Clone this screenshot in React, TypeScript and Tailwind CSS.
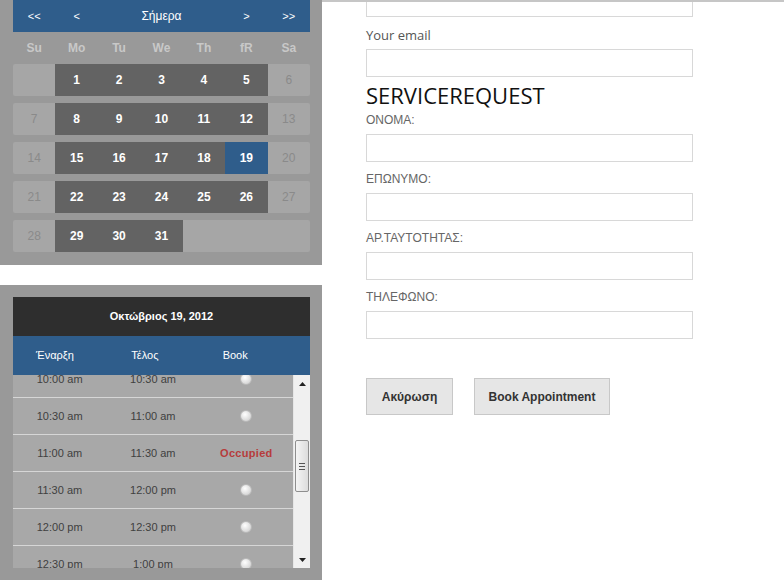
import React from "react";

const arial = { fontFamily: '"Liberation Sans", Arial, sans-serif' };

type Cell = { d: string; kind: "light" | "dark" | "sel" | "empty" };

const rows: Cell[][] = [
  [
    { d: "", kind: "light" },
    { d: "1", kind: "dark" },
    { d: "2", kind: "dark" },
    { d: "3", kind: "dark" },
    { d: "4", kind: "dark" },
    { d: "5", kind: "dark" },
    { d: "6", kind: "light" },
  ],
  [
    { d: "7", kind: "light" },
    { d: "8", kind: "dark" },
    { d: "9", kind: "dark" },
    { d: "10", kind: "dark" },
    { d: "11", kind: "dark" },
    { d: "12", kind: "dark" },
    { d: "13", kind: "light" },
  ],
  [
    { d: "14", kind: "light" },
    { d: "15", kind: "dark" },
    { d: "16", kind: "dark" },
    { d: "17", kind: "dark" },
    { d: "18", kind: "dark" },
    { d: "19", kind: "sel" },
    { d: "20", kind: "light" },
  ],
  [
    { d: "21", kind: "light" },
    { d: "22", kind: "dark" },
    { d: "23", kind: "dark" },
    { d: "24", kind: "dark" },
    { d: "25", kind: "dark" },
    { d: "26", kind: "dark" },
    { d: "27", kind: "light" },
  ],
  [
    { d: "28", kind: "light" },
    { d: "29", kind: "dark" },
    { d: "30", kind: "dark" },
    { d: "31", kind: "dark" },
    { d: "", kind: "light" },
    { d: "", kind: "light" },
    { d: "", kind: "light" },
  ],
];

function DayCell({ c }: { c: Cell }) {
  if (c.kind === "dark")
    return (
      <div className="flex items-center justify-center bg-[#636363] text-[12px] font-bold text-white">
        {c.d}
      </div>
    );
  if (c.kind === "sel")
    return (
      <div className="flex items-center justify-center bg-[#2f5d8b] text-[12px] font-bold text-white">
        {c.d}
      </div>
    );
  return (
    <div className="flex items-center justify-center bg-[#a6a6a6] text-[12px] text-[#8a8a8a]">
      {c.d}
    </div>
  );
}

function Calendar() {
  return (
    <div className="bg-[#999999] pl-[13px] pr-[12px] pb-[13px]" style={arial}>
      <div className="grid h-[32px] grid-cols-7 items-center bg-[#2f5d8b] text-[11px] text-white">
        <div className="text-center">&lt;&lt;</div>
        <div className="text-center">&lt;</div>
        <div className="col-span-3 text-center text-[12px]">Σήμερα</div>
        <div className="text-center">&gt;</div>
        <div className="text-center">&gt;&gt;</div>
      </div>
      <div className="grid h-[32px] grid-cols-7 items-center text-[12px] font-bold text-[#c8c8c8]">
        {["Su", "Mo", "Tu", "We", "Th", "fR", "Sa"].map((d) => (
          <div key={d} className="text-center">
            {d}
          </div>
        ))}
      </div>
      <div className="flex flex-col gap-[7px]">
        {rows.map((r, i) => (
          <div key={i} className="grid h-[32px] grid-cols-7 overflow-hidden rounded-[2px]">
            {r.map((c, j) => (
              <DayCell key={j} c={c} />
            ))}
          </div>
        ))}
      </div>
    </div>
  );
}

const slots = [
  ["10:00 am", "10:30 am", false],
  ["10:30 am", "11:00 am", false],
  ["11:00 am", "11:30 am", true],
  ["11:30 am", "12:00 pm", false],
  ["12:00 pm", "12:30 pm", false],
  ["12:30 pm", "1:00 pm", false],
] as const;

function Radio() {
  return (
    <span className="inline-block h-[12px] w-[12px] rounded-full border border-[#b9b9b9] bg-[radial-gradient(circle_at_40%_35%,#ffffff,#d8d8d8_70%)]" />
  );
}

function Scrollbar() {
  return (
    <div className="flex w-[17px] flex-col border-l border-[#e6e6e6] bg-[#f0f0f0]">
      <div className="flex h-[17px] items-center justify-center">
        <svg width="7" height="4" viewBox="0 0 7 4">
          <path d="M0 4 L3.5 0 L7 4 Z" fill="#222" />
        </svg>
      </div>
      <div className="h-[48px]" />
      <div className="mx-[1px] flex h-[52px] items-center justify-center rounded-[2px] border border-[#8e8e8e] bg-[linear-gradient(to_right,#f4f4f4,#dcdcdc)]">
        <div className="flex flex-col gap-[2px]">
          <div className="h-px w-[6px] bg-[#555]" />
          <div className="h-px w-[6px] bg-[#555]" />
          <div className="h-px w-[6px] bg-[#555]" />
        </div>
      </div>
      <div className="flex-1" />
      <div className="flex h-[17px] items-center justify-center">
        <svg width="7" height="4" viewBox="0 0 7 4">
          <path d="M0 0 L7 0 L3.5 4 Z" fill="#222" />
        </svg>
      </div>
    </div>
  );
}

function TimeTable() {
  return (
    <div className="h-[295px] bg-[#999999] pl-[13px] pr-[12px] pt-[12px]" style={arial}>
      <div className="flex h-[39px] items-center justify-center bg-[#2e2e2e] text-[11px] font-bold text-white">
        Οκτώβριος 19, 2012
      </div>
      <div className="flex h-[39px] bg-[#2f5d8b]">
        <div className="grid w-[280px] grid-cols-3 items-center text-[11px] text-white">
          <div className="pl-[23px]">Έναρξη</div>
          <div className="pl-[25px]">Τέλος</div>
          <div className="pl-[23px]">Book</div>
        </div>
      </div>
      <div className="flex h-[193px]">
        <div className="w-[280px] overflow-hidden bg-[#a8a8a8]">
          <div className="-mt-[14px]">
            {slots.map(([a, b, occ], i) => (
              <div
                key={i}
                className="grid h-[37px] grid-cols-3 items-center border-b border-[#d6d6d6] text-[11px] text-[#404040]"
              >
                <div className="text-center">{a}</div>
                <div className="text-center">{b}</div>
                <div className="flex justify-center">
                  {occ ? (
                    <span className="text-[11px] font-bold tracking-[0.3px] text-[#b63b3b]">Occupied</span>
                  ) : (
                    <Radio />
                  )}
                </div>
              </div>
            ))}
          </div>
        </div>
        <Scrollbar />
      </div>
    </div>
  );
}

function Field({ label }: { label: string }) {
  return (
    <div className="mb-[10px]">
      <div className="mb-[7px] text-[12px] leading-[14px] text-[#666]" style={arial}>
        {label}
      </div>
      <div className="h-[28px] w-[327px] border border-[#d8d8d8] bg-white" />
    </div>
  );
}

export default function App() {
  return (
    <div className="flex h-[580px] w-[784px] overflow-hidden bg-white">
      <div className="flex w-[322px] flex-col">
        <Calendar />
        <div className="h-[20px] bg-white" />
        <TimeTable />
      </div>
      <div className="flex-1 overflow-hidden border-t-2 border-[#c6c6c6] pl-[44px]">
        <div className="-mt-[13px]">
          <div className="h-[28px] w-[327px] border border-[#d8d8d8] bg-white" />
          <div
            className="mt-[9px] mb-[5px] text-[13px] leading-[18px] text-[#555]"
            style={{ fontFamily: '"Open Sans", Arial, sans-serif' }}
          >
            Your email
          </div>
          <div className="h-[28px] w-[327px] border border-[#d8d8d8] bg-white" />
          <div
            className="mt-[5px] mb-[5px] text-[22px] leading-[26px] text-[#111]"
            style={{ fontFamily: '"Open Sans", Arial, sans-serif' }}
          >
            SERVICEREQUEST
          </div>
          <Field label="ΟΝΟΜΑ:" />
          <Field label="ΕΠΩΝΥΜΟ:" />
          <Field label="ΑΡ.ΤΑΥΤΟΤΗΤΑΣ:" />
          <Field label="ΤΗΛΕΦΩΝΟ:" />
          <div className="mt-[39px] flex gap-[21px]" style={arial}>
            <button className="h-[37px] w-[87px] border border-[#c8c8c8] bg-[#e6e6e6] text-[12px] font-bold text-[#333]">
              Ακύρωση
            </button>
            <button className="h-[37px] w-[136px] border border-[#c8c8c8] bg-[#e6e6e6] text-[12px] font-bold text-[#333]">
              Book Appointment
            </button>
          </div>
        </div>
      </div>
    </div>
  );
}
